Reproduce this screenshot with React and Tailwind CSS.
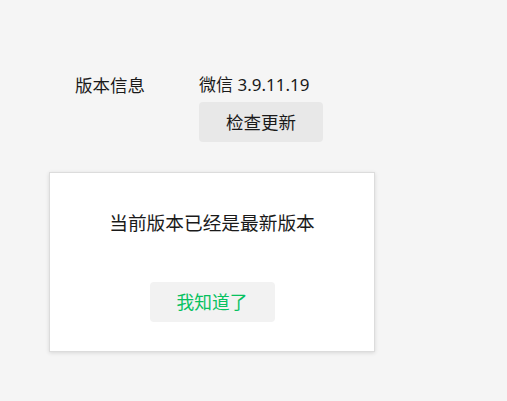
export default function App() {
  const font = { fontFamily: '"Noto Sans", "Noto Sans CJK SC", sans-serif' };
  return (
    <div
      className="min-h-screen w-full bg-[#f5f5f5] text-[#1a1a1a] pt-[73px] pl-[75px]"
      style={font}
    >
      <div className="flex">
        <div className="w-[124px] text-[17.5px] leading-[24px]">版本信息</div>
        <div className="flex flex-col">
          <div className="text-[17px] leading-[24px]">微信 3.9.11.19</div>
          <button className="mt-[5px] w-[124px] h-[40px] rounded bg-[#e8e8e8] text-[17.5px] text-[#1a1a1a]">
            检查更新
          </button>
        </div>
      </div>

      <div className="mt-[30px] -ml-[26px] w-[326px] h-[180px] bg-white border border-[#dcdcdc] shadow-[0_1px_4px_rgba(0,0,0,0.12)] flex flex-col items-center pt-[38px]">
        <div className="text-[18.7px] leading-[24px] text-[#1a1a1a]">当前版本已经是最新版本</div>
        <button className="mt-[47px] w-[125px] h-[40px] rounded bg-[#f2f2f2] text-[17.7px] text-[#07c160]">
          我知道了
        </button>
      </div>
    </div>
  );
}
